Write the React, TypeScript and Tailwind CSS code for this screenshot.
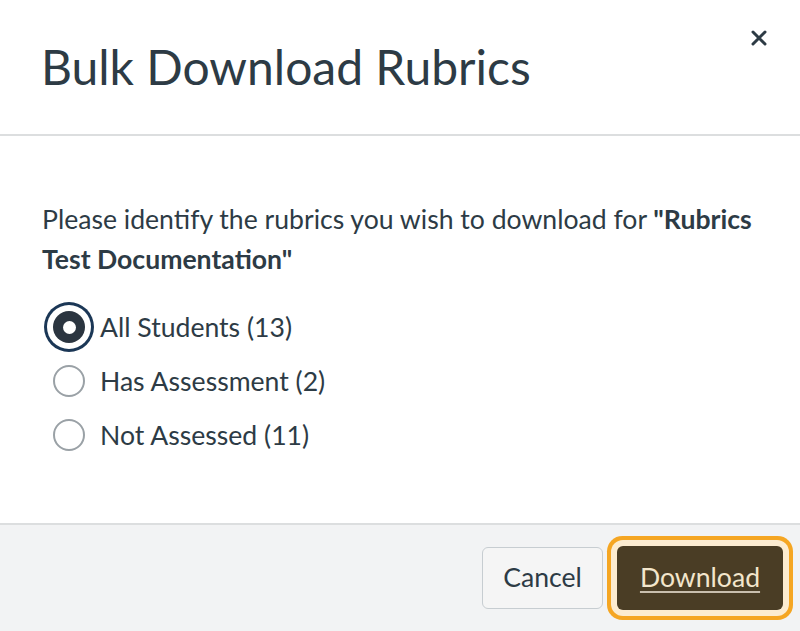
import { useState } from 'react'

const OPTIONS = [
  { id: 'all', label: 'All Students (13)' },
  { id: 'assessed', label: 'Has Assessment (2)' },
  { id: 'not', label: 'Not Assessed (11)' },
]

export default function App() {
  const [selected, setSelected] = useState('all')

  return (
    <div className="w-[800px] h-[631px] flex flex-col bg-white text-[#2d3b45] font-['Lato','Liberation_Sans',sans-serif]">
      {/* Header */}
      <div className="h-[136px] shrink-0 flex justify-between border-b-2 border-[#dcdedf] pl-[41px] pr-[32px]">
        <h1 className="self-center text-[48px] leading-none font-normal">
          Bulk Download Rubrics
        </h1>
        <button className="mt-[29px] w-[18px] h-[18px] flex items-center justify-center text-[#2d3b45]">
          <svg width="16" height="16" viewBox="0 0 16 16">
            <path d="M2 2 L14 14 M14 2 L2 14" stroke="currentColor" strokeWidth="3" strokeLinecap="round" />
          </svg>
        </button>
      </div>

      {/* Body */}
      <div className="flex-1 pl-[42px] pr-[20px] pt-[63px]">
        <p className="text-[26.6px] leading-[40px]">
          Please identify the rubrics you wish to download for{' '}
          <span className="font-bold">"Rubrics Test Documentation"</span>
        </p>
        <div className="mt-[21px] flex flex-col">
          {OPTIONS.map((o) => {
            const isOn = selected === o.id
            return (
              <label
                key={o.id}
                onClick={() => setSelected(o.id)}
                className="h-[54px] flex items-center gap-[15px] pl-[11px] cursor-pointer"
              >
                {isOn ? (
                  <span className="w-[32px] h-[32px] rounded-full bg-[#2b3540] flex items-center justify-center shadow-[0_0_0_6px_#ffffff,0_0_0_9px_#1b3756]">
                    <span className="w-[13px] h-[13px] rounded-full bg-white" />
                  </span>
                ) : (
                  <span className="w-[32px] h-[32px] rounded-full border-2 border-[#9aa1a6] bg-white" />
                )}
                <span className="text-[26.6px] leading-none">{o.label}</span>
              </label>
            )
          })}
        </div>
      </div>

      {/* Footer */}
      <div className="h-[108px] shrink-0 bg-[#f2f3f4] border-t-2 border-[#dcdedf] flex items-center justify-end gap-[14px] pr-[17px]">
        <button className="h-[62px] w-[121px] rounded-[6px] border border-[#c7cdd1] bg-[#f5f5f5] text-[26.6px] text-[#2d3b45]">
          Cancel
        </button>
        <button className="h-[64px] w-[166px] rounded-[6px] bg-[#4a3d25] text-[26.6px] text-[#f3e6cc] underline decoration-[#c9bfae] underline-offset-[4px] decoration-[2px] shadow-[0_0_0_6px_#fcecd1,0_0_0_10px_#f5a623]">
          Download
        </button>
      </div>
    </div>
  )
}
